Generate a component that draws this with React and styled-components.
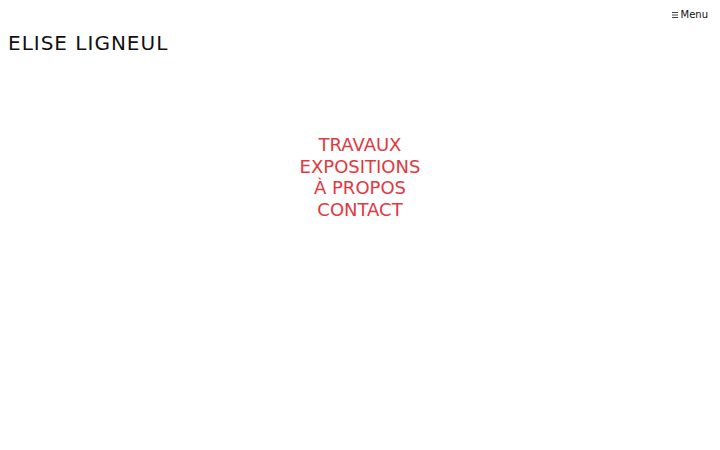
import React from "react";
import styled, { createGlobalStyle } from "styled-components";

const Global = createGlobalStyle`
  html, body {
    margin: 0;
    padding: 0;
    background: #fff;
    font-family: "DejaVu Sans", sans-serif;
  }
`;

const Page = styled.div`
  display: flex;
  flex-direction: column;
  height: 450px;
`;

const TopBar = styled.div`
  display: flex;
  justify-content: flex-end;
  padding: 8px 12px 0 0;
`;

const MenuButton = styled.button`
  display: flex;
  align-items: center;
  gap: 3px;
  border: none;
  background: none;
  padding: 0;
  font-family: "DejaVu Sans", sans-serif;
  font-size: 10px;
  line-height: 13px;
  color: #111;
  cursor: pointer;
`;

const Title = styled.h1`
  margin: 10px 0 0 8px;
  font-size: 20px;
  line-height: 24px;
  font-weight: 400;
  letter-spacing: 1px;
  color: #111;
`;

const Nav = styled.ul`
  list-style: none;
  margin: 79px 0 0;
  padding: 0;
  display: flex;
  flex-direction: column;
  align-items: center;
`;

const NavItem = styled.li`
  font-size: 18px;
  line-height: 21.7px;
  color: #e2383f;
`;

const items = ["TRAVAUX", "EXPOSITIONS", "À PROPOS", "CONTACT"];

export default function App() {
  return (
    <Page>
      <Global />
      <TopBar>
        <MenuButton type="button">
          <svg width="6" height="6" viewBox="0 0 6 6" aria-hidden="true">
            <path d="M0 0.5h6M0 3h6M0 5.5h6" stroke="#444" strokeWidth="1" />
          </svg>
          Menu
        </MenuButton>
      </TopBar>
      <Title>ELISE LIGNEUL</Title>
      <Nav>
        {items.map((item) => (
          <NavItem key={item}>{item}</NavItem>
        ))}
      </Nav>
    </Page>
  );
}
